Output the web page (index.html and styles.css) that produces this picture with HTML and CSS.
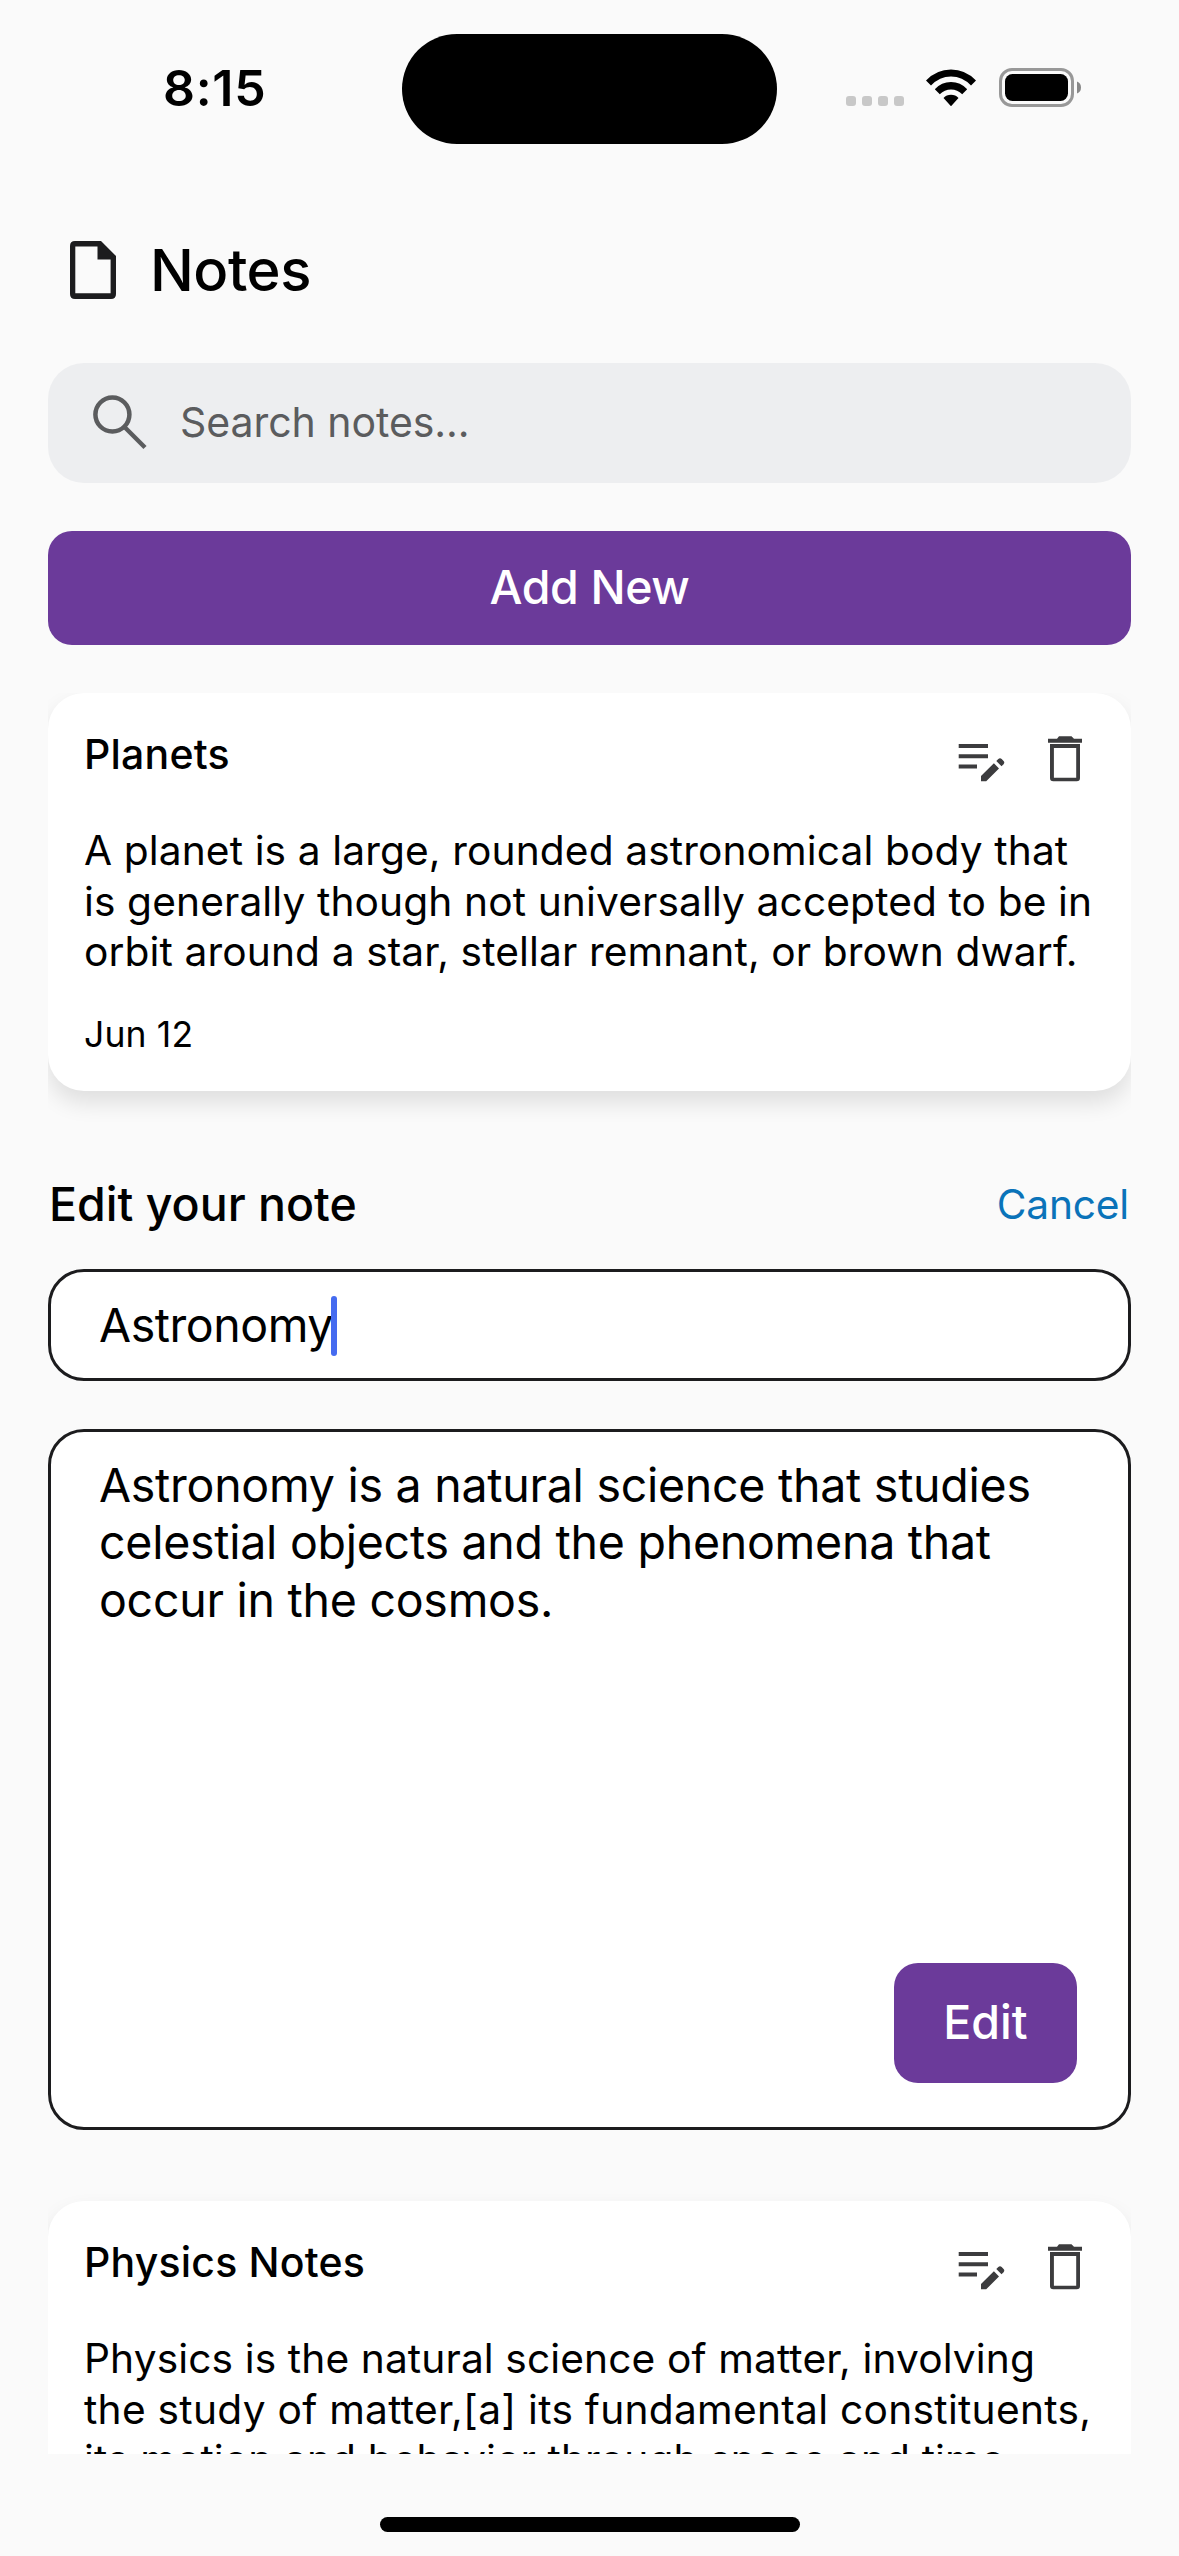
FILE: index.html
```html
<!DOCTYPE html>
<html lang="en">
<head>
<meta charset="utf-8">
<title>Notes</title>
<link rel="stylesheet" href="styles.css">
</head>
<body>
<svg class="sprite" aria-hidden="true">
  <symbol id="edit-note" viewBox="0 0 60 60">
    <path d="M7.7 15H37v4H7.7zM7.7 25.2H37v4.1H7.7zM7.7 35.5H26v4.1H7.7z"/>
    <path d="M30 52.3V47L42.9 34.3L48 39.4L35.2 52.3zM45.3 32L47.3 30.1Q49 28.5 50.7 30.1L52.6 32Q54 33.6 52.6 35.2L50.5 37.2z"/>
  </symbol>
  <symbol id="trash" viewBox="0 0 60 60">
    <path d="M13 9.7H22L24 7.2H36.5L39 9.7H47V13.8H13z"/>
    <path fill-rule="evenodd" d="M15 15H45V49Q45 52.3 41.7 52.3H18.3Q15 52.3 15 49zM18.9 19V48.7H41.2V19z"/>
  </symbol>
</svg>
<div class="screen">
  <header class="status">
    <span class="time">8:15</span>
    <span class="island"></span>
    <span class="indicators">
      <svg class="dots" width="58" height="10" viewBox="0 0 58 10"><rect width="10" height="10" rx="3"/><rect x="16" width="10" height="10" rx="3"/><rect x="32" width="10" height="10" rx="3"/><rect x="48" width="10" height="10" rx="3"/></svg>
      <svg class="wifi" width="50" height="38" viewBox="0 0 50 38"><path d="M0 11.5Q10.5 0.5 25 0.5T50 11.5L45 16.5Q36.5 7.5 25 7.5T5 16.5zM8.8 20.2Q15.5 13 25 13T41.2 20.2L36.2 25.2Q31.5 20.5 25 20.5T13.8 25.2zM17.5 29Q20.5 25.7 25 25.7T32.5 29L25 37.2z"/></svg>
      <svg class="battery" width="82" height="39" viewBox="0 0 82 39"><rect x="1.5" y="1.5" width="72" height="36" rx="11.5" fill="none" stroke="#989898" stroke-width="3"/><rect x="6" y="6" width="63" height="27" rx="7.5"/><path d="M78 13.5Q82 15 82 19.5T78 25.5z" fill="#888"/></svg>
    </span>
  </header>
  <div class="heading">
    <svg width="46" height="58" viewBox="0 0 46 58"><path fill="#1c1c1e" fill-rule="evenodd" d="M5 0H31L46 15V53Q46 58 41 58H5Q0 58 0 53V5Q0 0 5 0zM5.3 5.5V52.3H40.6V18.5H27.5V5.5z"/></svg>
    <h1>Notes</h1>
  </div>
  <div class="search">
    <svg width="56" height="56" viewBox="0 0 56 56" fill="none" stroke="#5b5c5e" stroke-width="4.5"><circle cx="19.4" cy="20.5" r="17"/><path d="M31 32.5L52 53.5"/></svg>
    <span>Search notes...</span>
  </div>
  <button class="add">Add New</button>
  <main class="list">
    <article class="card">
      <div class="card-head"><h2>Planets</h2><div class="actions"><svg><use href="#edit-note"/></svg><svg><use href="#trash"/></svg></div></div>
      <p class="body">A planet is a large, rounded astronomical body that<br>is generally though not universally accepted to be in<br>orbit around a star, stellar remnant, or brown dwarf.</p>
      <p class="date">Jun 12</p>
    </article>
    <section class="editor">
      <div class="editor-head"><h3>Edit your note</h3><a class="cancel">Cancel</a></div>
      <div class="field"><span>Astronomy</span><i class="caret"></i></div>
      <div class="area">
        <p>Astronomy is a natural science that studies<br>celestial objects and the phenomena that<br>occur in the cosmos.</p>
        <button class="save">Edit</button>
      </div>
    </section>
    <article class="card">
      <div class="card-head"><h2>Physics Notes</h2><div class="actions"><svg><use href="#edit-note"/></svg><svg><use href="#trash"/></svg></div></div>
      <p class="body">Physics is the natural science of matter, involving<br><span class="loose">the study of matter,[a] its fundamental constituents,</span><br>its motion and behavior through space and time,</p>
    </article>
  </main>
  <div class="home"></div>
</div>
</body>
</html>
```
FILE: styles.css
```css
* { box-sizing: border-box; }
body { margin: 0; background: #fafafa; color: #000; font-family: Inter, "Liberation Sans", sans-serif; }
h1, h2, h3, p { margin: 0; font-weight: 500; }
button { border: 0; padding: 0 0 2px; font: inherit; color: #fff; background: #6b3a9a; border-radius: 24px; }
.sprite { position: absolute; width: 0; height: 0; }
.screen { width: 1179px; height: 2556px; overflow: hidden; display: flex; flex-direction: column; }

.status { display: grid; grid-template-columns: 402px 375px 402px; height: 235px; align-items: start; }
.time { padding: 58px 0 0 163px; font-size: 50px; line-height: 60px; font-weight: 600; letter-spacing: 0.7px; }
.island { height: 110px; margin-top: 34px; border-radius: 55px; background: #000; }
.indicators { display: flex; align-items: flex-start; padding: 68px 0 0 69px; }
.dots { margin: 28px 22px 0 0; fill: #c8c8c8; }
.wifi { margin: 1px 23px 0 0; }

.heading { display: flex; align-items: flex-start; gap: 34px; padding-left: 70px; height: 128px; }
.heading svg { margin-top: 6px; }
h1 { font-size: 58px; line-height: 70px; letter-spacing: -0.5px; }

.search { display: flex; align-items: center; gap: 31px; height: 120px; margin: 0 48px 48px; padding: 0 0 2px 45px; border-radius: 36px; background: #edeef0; color: #5b5c5e; font-size: 41px; letter-spacing: -0.05px; }
.add { height: 114px; margin: 0 48px 48px; font-size: 46.5px; font-weight: 500; letter-spacing: -0.4px; }

.list { height: 1761px; margin: 0 48px; overflow: hidden; flex: none; }
.card { height: 398px; padding: 36px; border-radius: 36px; background: #fff; box-shadow: 0 12px 22px rgba(0, 0, 0, 0.11); }
.card-head { display: flex; justify-content: space-between; height: 60px; margin-bottom: 37px; }
h2 { font-size: 41px; line-height: 50px; font-weight: 500; letter-spacing: 0.2px; }
.actions { display: flex; gap: 24px; fill: #3c3c3e; }
.actions svg { width: 60px; height: 60px; }
.body { font-size: 40.7px; line-height: 50.5px; font-weight: 400; letter-spacing: 0.11px; white-space: nowrap; }
.loose { letter-spacing: 0.27px; }
.date { margin-top: 36px; font-size: 35.5px; line-height: 42px; font-weight: 400; letter-spacing: 0.15px; }

.editor { padding: 83px 0 71px; }
.editor-head { display: flex; justify-content: space-between; height: 95px; padding: 0 2px 0 1px; }
h3 { font-size: 46.5px; line-height: 60px; }
.cancel { padding-top: 1px; color: #0a73b9; font-size: 40.7px; line-height: 60px; letter-spacing: -0.2px; }
.field { display: flex; align-items: center; height: 112px; margin-bottom: 48px; padding-left: 48px; border: 3px solid #1c1c1e; border-radius: 36px; background: #fff; font-size: 46.5px; letter-spacing: -0.45px; }
.caret { width: 6px; height: 60px; margin: 2px 0 0 -2px; border-radius: 3px; background: #456bf0; }
.area { display: flex; flex-direction: column; justify-content: space-between; align-items: flex-end; height: 701px; padding: 25px 51px 44px 48px; border: 3px solid #1c1c1e; border-radius: 36px; background: #fff; }
.area p { align-self: stretch; font-size: 46.5px; line-height: 57.3px; font-weight: 400; letter-spacing: -0.26px; white-space: nowrap; }
.save { width: 183px; height: 120px; font-size: 46.5px; font-weight: 500; }

.home { width: 420px; height: 15px; margin: 63px auto 0; border-radius: 8px; background: #000; }
```
